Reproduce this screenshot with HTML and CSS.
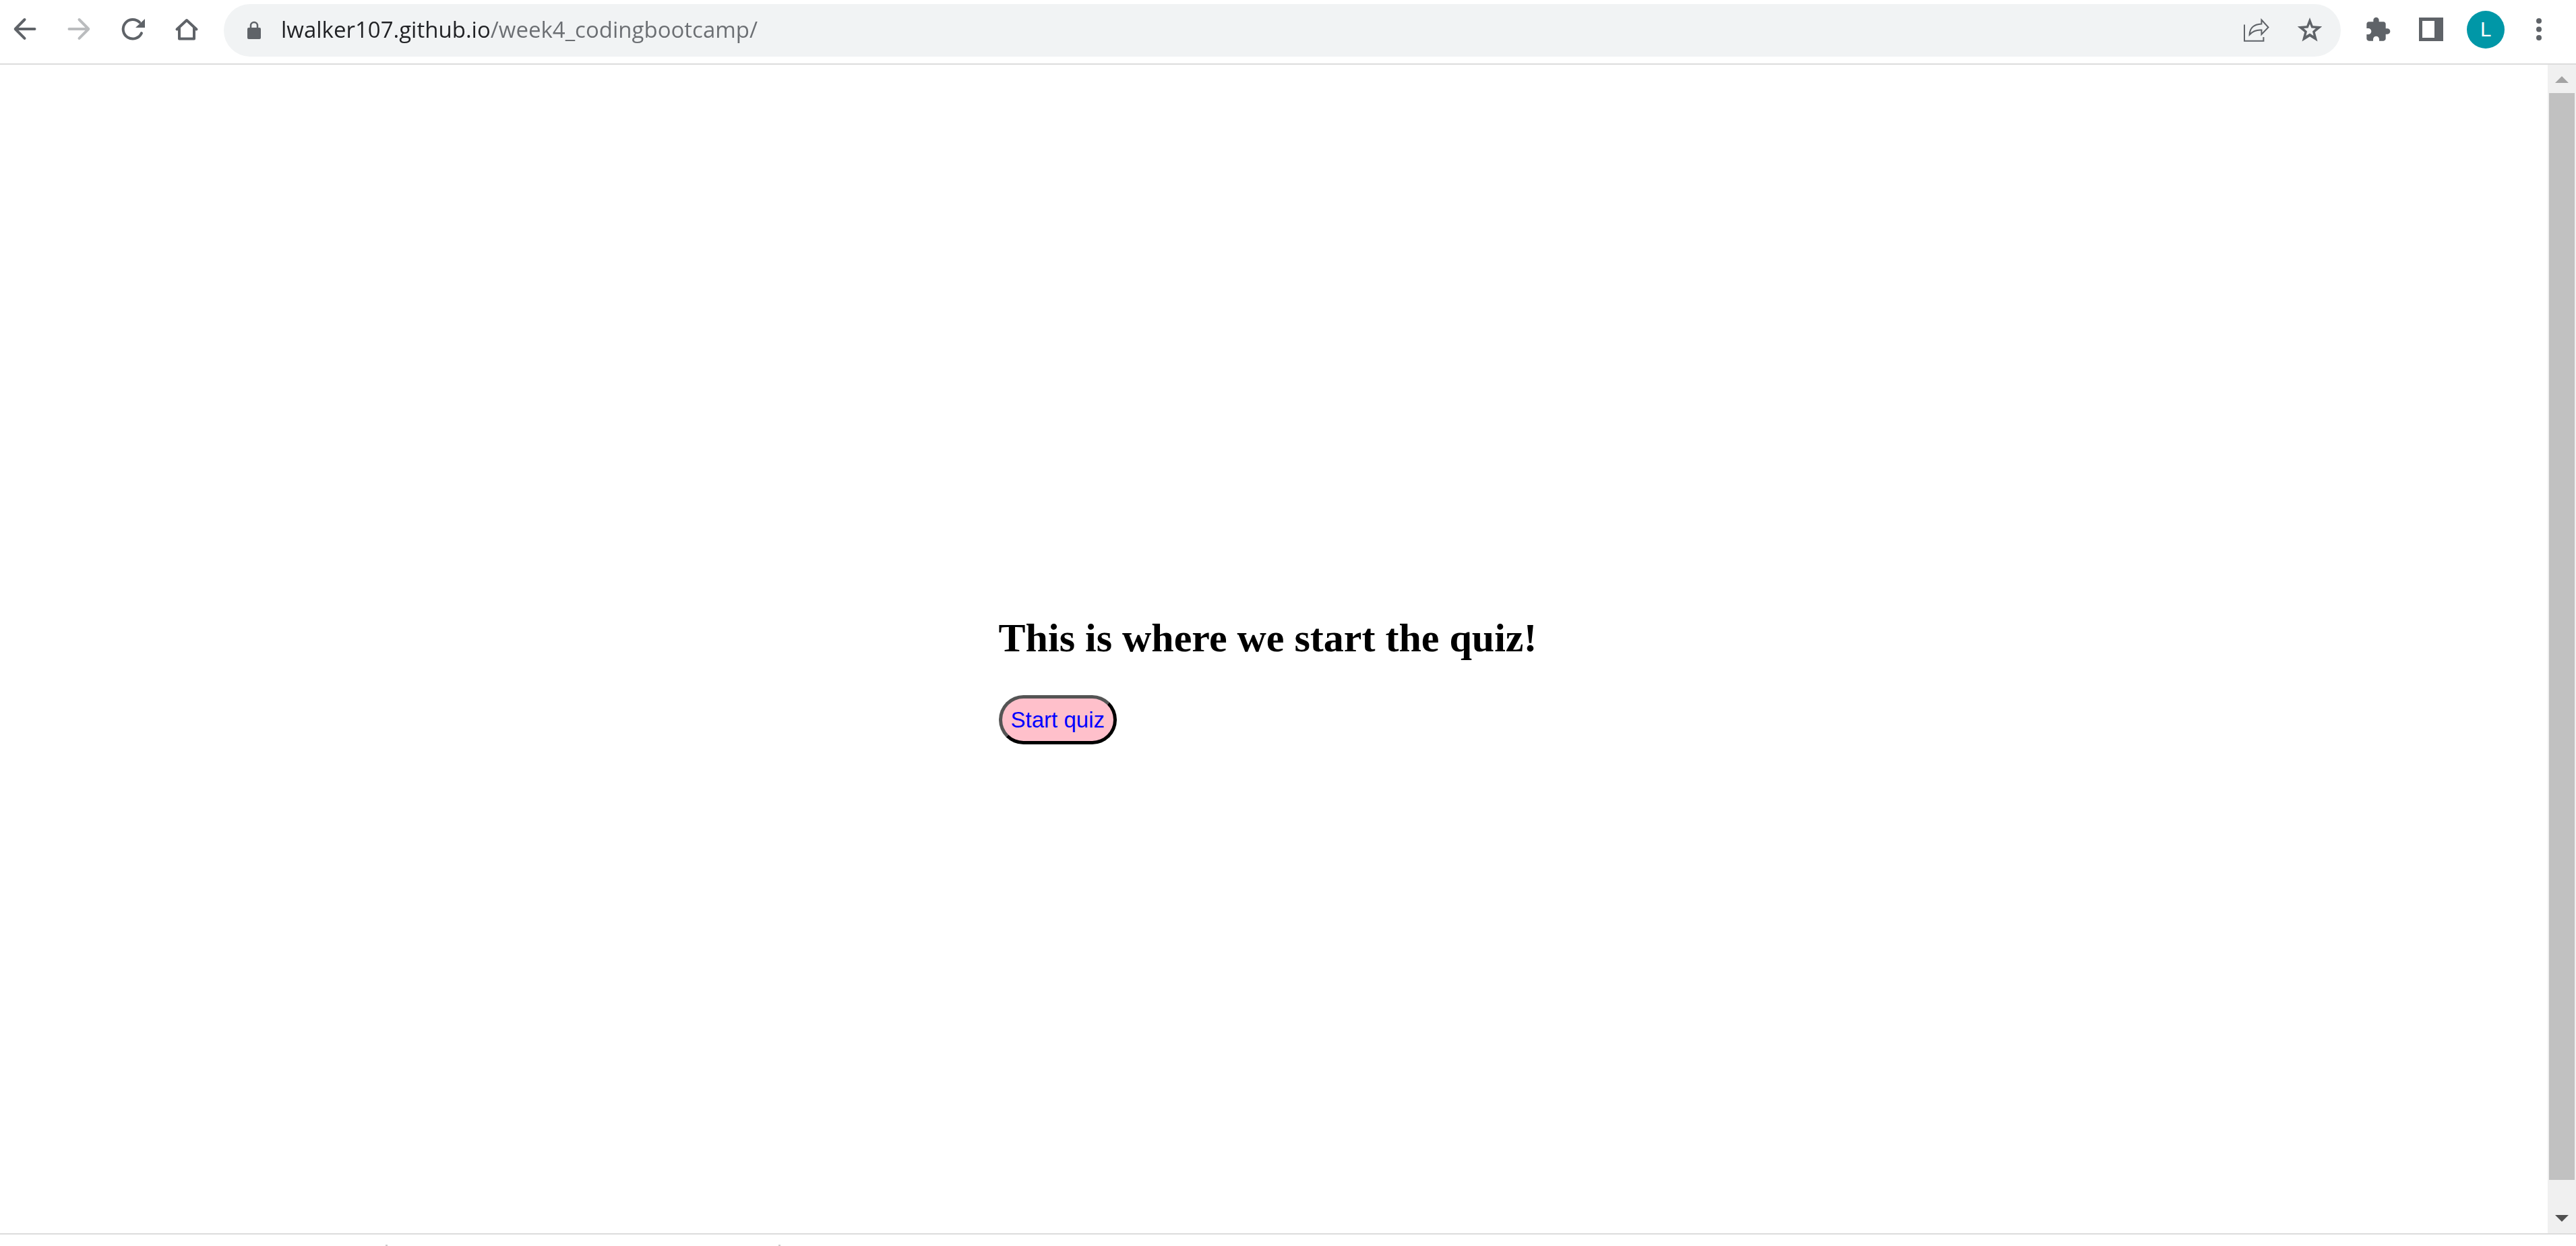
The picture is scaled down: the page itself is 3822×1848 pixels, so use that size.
FILE: index.html
```html
<!DOCTYPE html>
<html lang="en">
<head>
<meta charset="utf-8">
<title>Quiz</title>
<link rel="stylesheet" href="styles.css">
</head>
<body>
<header class="toolbar">
  <nav class="tools">
    <button class="tool" aria-label="Back"><svg class="icon line" viewBox="0 0 40 40"><path d="M34.5 19H6M19.5 5L5.7 19l13.800 13.800"/></svg></button>
    <button class="tool" aria-label="Forward" disabled><svg class="icon line" viewBox="0 0 40 40"><path d="M5.500 19H34M20.500 5l13.800 14-13.800 13.800"/></svg></button>
    <button class="tool" aria-label="Reload"><svg class="icon line" viewBox="0 0 40 40"><path d="M30 9A14.300 14.300 0 1 0 33 25.200"/><path class="solid" d="M38 4v13H24z"/></svg></button>
    <button class="tool" aria-label="Home"><svg class="icon line" viewBox="0 0 40 40"><path d="M5.500 19.500L20 6l14.500 13.500M9 17.500V33.500H31V17.500"/></svg></button>
  </nav>
  <form class="address">
    <svg class="lock" viewBox="0 0 20 28"><rect y="10" width="20" height="17" rx="2"/><path d="M5 11V7a5 5 0 0 1 10 0v4" fill="none" stroke="#5f6368" stroke-width="2.500"/></svg>
    <input class="url" type="text" aria-label="Address" value="lwalker107.github.io/week4_codingbootcamp/" spellcheck="false">
    <div class="tools">
      <button class="tool" type="button" aria-label="Share"><svg class="icon thin" viewBox="0 0 40 40"><path d="M3 12.500V36.800H31.400V31M28.400 5.500L38.500 16.500 28.400 27V20.500C20 20 15 22.500 10.600 27.500 11 17.500 17 12 28.400 11.500z"/></svg></button>
      <button class="tool" type="button" aria-label="Bookmark"><svg class="icon solid" viewBox="0 0 40 40"><path fill-rule="evenodd" d="M20 2l4.700 12.200 13.600 1-10.500 8.600L31.500 37.500 20 30.200 8.500 37.500l3.700-13.700L1.700 15.200l13.600-1zM20 11.500l-2.400 6-6.600.6 5 4.300-1.600 6.600 5.600-3.500 5.600 3.500-1.600-6.600 5-4.300-6.600-.6z"/></svg></button>
    </div>
  </form>
  <div class="tools">
    <button class="tool" aria-label="Extensions"><svg class="icon solid" viewBox="0 0 24 24"><path d="M20.500 11H19V7c0-1.100-.9-2-2-2h-4V3.500C13 2.120 11.880 1 10.500 1S8 2.120 8 3.500V5H4c-1.100 0-1.990.9-1.990 2v3.800H3.500c1.490 0 2.700 1.210 2.700 2.700s-1.210 2.700-2.700 2.700H2V20c0 1.100.9 2 2 2h3.800v-1.500c0-1.490 1.210-2.700 2.700-2.700 1.490 0 2.700 1.210 2.700 2.700V22H17c1.100 0 2-.9 2-2v-4h1.500c1.380 0 2.500-1.120 2.500-2.500S21.880 11 20.500 11z"/></svg></button>
    <button class="tool" aria-label="Side panel"><svg class="icon solid" viewBox="0 0 40 40"><path fill-rule="evenodd" d="M1 2H37V37H1zM6 7V32H24V7z"/></svg></button>
    <button class="tool" aria-label="Profile"><span class="avatar">L</span></button>
    <button class="tool" aria-label="Menu"><svg class="icon solid" viewBox="0 0 40 40"><circle cx="19" cy="7" r="4"/><circle cx="19" cy="19.500" r="4"/><circle cx="19" cy="32" r="4"/></svg></button>
  </div>
</header>
<div class="viewport">
  <main class="page">
    <section class="intro">
      <h1 class="title">This is where we start the quiz!</h1>
      <button class="start">Start quiz</button>
    </section>
  </main>
  <aside class="scrollbar">
    <svg class="arrow up" viewBox="0 0 20 10"><path d="M0 10L10 0l10 10z"/></svg>
    <div class="thumb"></div>
    <svg class="arrow down" viewBox="0 0 20 10"><path d="M0 0h20L10 10z"/></svg>
  </aside>
</div>
<footer class="shelf"><span class="speck"></span><span class="speck"></span></footer>
</body>
</html>
```

FILE: styles.css
```css
* { box-sizing: border-box; }
body {
  margin: 0;
  min-height: 100vh;
  display: flex;
  flex-direction: column;
  background: #fff;
  font-family: "Liberation Sans", Arial, sans-serif;
}
button { font: inherit; padding: 0; border: 0; background: none; }

.toolbar {
  display: flex;
  align-items: flex-start;
  gap: 27px;
  padding: 6px 26px 10px 9px;
  border-bottom: 2px solid #dcdcdc;
}
.tools { display: flex; gap: 24px; }
.tool {
  width: 56px;
  height: 76px;
  display: flex;
  align-items: center;
  justify-content: center;
  color: #5f6368;
}
.tool:disabled { color: #babcbe; }
.icon { width: 40px; height: 40px; }
.line { fill: none; stroke: currentColor; stroke-width: 4; stroke-linecap: round; stroke-linejoin: round; }
.thin { fill: none; stroke: currentColor; stroke-width: 2; }
.solid { fill: currentColor; stroke: none; }
.avatar {
  width: 56px;
  height: 56px;
  border-radius: 50%;
  background: #0097a7;
  color: #fff;
  font: 30px/56px Roboto, sans-serif;
  text-align: center;
}

.address {
  flex: 1;
  height: 78px;
  display: flex;
  padding: 0 18px 0 35px;
  border-radius: 39px;
  background: #f1f3f4;
}
.lock { width: 20px; height: 28px; margin-top: 25px; fill: #5f6368; }
.url {
  flex: 1;
  height: 74px;
  margin: 0 0 0 30px;
  padding: 0;
  border: 0;
  outline: 0;
  font: 33px "Open Sans", sans-serif;
  color: #202124;
  background: linear-gradient(90deg, #202124 309px, #6b6e72 309px);
  -webkit-background-clip: text;
  background-clip: text;
  -webkit-text-fill-color: transparent;
}

.viewport { flex: 1; display: flex; border-bottom: 2px solid #dcdcdc; }
.page {
  flex: 1;
  display: flex;
  align-items: center;
  justify-content: center;
  padding: 90px 18px 0 0;
}
.title {
  margin: 0 0 50px;
  font: bold 60px/69px "Liberation Serif", "Times New Roman", serif;
  color: #000;
}
.start {
  display: block;
  padding: 12px 13px;
  border: 5px solid;
  border-color: #545454 #000 #000 #545454;
  border-radius: 38px;
  background: pink;
  color: #00f;
  font-size: 33px;
  line-height: 39px;
}

.scrollbar {
  width: 42px;
  display: flex;
  flex-direction: column;
  align-items: center;
  padding: 17px 0;
  background: #f0f0f0;
}
.arrow { width: 20px; height: 10px; }
.up { fill: #a3a3a3; }
.down { fill: #505050; }
.thumb { flex: 1; width: 38px; margin: 15px 0 52px; background: #c1c1c1; }

.shelf {
  height: 17px;
  display: flex;
  align-items: flex-end;
  justify-content: space-between;
  width: 1158px;
  padding-left: 572px;
}
.speck { width: 3px; height: 2px; background: #ccc; }
```
